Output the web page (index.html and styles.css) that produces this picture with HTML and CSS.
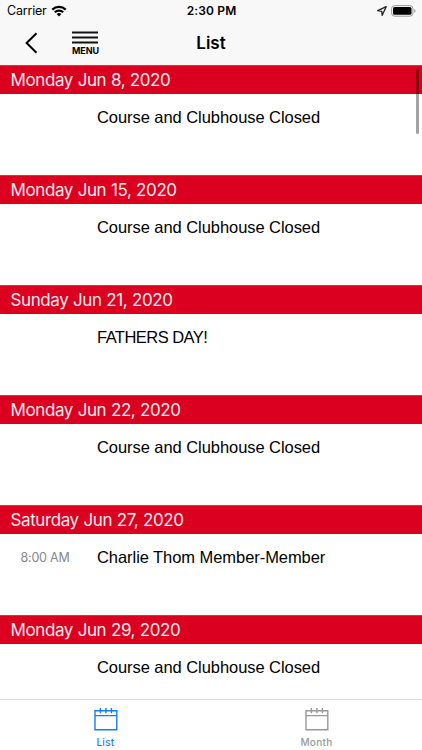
FILE: index.html
```
<!DOCTYPE html>
<html lang="en">
<head>
<meta charset="utf-8">
<meta name="viewport" content="width=device-width, initial-scale=1">
<title>List</title>
<link rel="stylesheet" href="styles.css">
</head>
<body>
<div class="app">
  <header class="top">
    <div class="status">
      <div class="status-left">
        <span>Carrier</span>
        <svg class="wifi" width="16" height="12" viewBox="0 0 16 12" fill="none" stroke="#000" stroke-width="2.2"><path d="M1.3 4.6a9.5 9.5 0 0 1 13.4 0M3.8 7.3a6 6 0 0 1 8.4 0"/><path d="M5.6 9.1a3.5 3.5 0 0 1 4.8 0L8 11.6z" fill="#000" stroke="none"/></svg>
      </div>
      <span class="clock">2:30 PM</span>
      <div class="status-right">
        <svg width="10" height="10" viewBox="0 0 10 10" fill="none" stroke="#222" stroke-width="1.3" stroke-linejoin="round"><path d="M9.2.7.7 4.7l4 .6.5 4z"/></svg>
        <svg width="25" height="12" viewBox="0 0 25 12"><rect x=".6" y=".6" width="21.3" height="10.6" rx="3" fill="none" stroke="#999"/><rect x="2" y="2" width="18.5" height="7.8" rx="1.6"/><path d="M23.2 4v4q1.3-.6 1.3-2t-1.3-2" fill="#999"/></svg>
      </div>
    </div>
    <nav class="navbar">
      <div class="nav-left">
        <svg class="back" width="13" height="22" viewBox="0 0 13 22" fill="none" stroke="#000" stroke-width="2"><path d="M11.5 1.3 1.6 11l9.9 9.7"/></svg>
        <div class="menu">
          <svg width="26" height="13" viewBox="0 0 26 13" stroke="#111" stroke-width="1.8"><path d="M0 1.5h26M0 6.5h26M0 11.5h26"/></svg>
          <span>MENU</span>
        </div>
      </div>
      <h1>List</h1>
      <div></div>
    </nav>
  </header>
  <main class="events">
    <section><h2>Monday Jun 8, 2020</h2><div class="event"><time></time><p>Course and Clubhouse Closed</p></div></section>
    <section><h2>Monday Jun 15, 2020</h2><div class="event"><time></time><p>Course and Clubhouse Closed</p></div></section>
    <section><h2>Sunday Jun 21, 2020</h2><div class="event"><time></time><p class="caps">FATHERS DAY!</p></div></section>
    <section><h2>Monday Jun 22, 2020</h2><div class="event"><time></time><p>Course and Clubhouse Closed</p></div></section>
    <section><h2>Saturday Jun 27, 2020</h2><div class="event"><time>8:00 AM</time><p>Charlie Thom Member-Member</p></div></section>
    <section><h2>Monday Jun 29, 2020</h2><div class="event"><time></time><p>Course and Clubhouse Closed</p></div></section>
    <div class="scrollbar"></div>
  </main>
  <footer class="tabs">
    <div class="tab active">
      <svg width="24" height="23" viewBox="0 0 24 23" fill="none" stroke="currentColor" stroke-width="1.4"><path d="M1 2.7h21.8v19H1zM1 7.6h21.8M6.4 0v5.3M11.9 0v5.3M17.4 0v5.3"/></svg>
      <span>List</span>
    </div>
    <div class="tab">
      <svg width="24" height="23" viewBox="0 0 24 23" fill="none" stroke="currentColor" stroke-width="1.4"><path d="M1 2.7h21.8v19H1zM1 7.6h21.8M6.4 0v5.3M11.9 0v5.3M17.4 0v5.3"/></svg>
      <span>Month</span>
    </div>
  </footer>
</div>
</body>
</html>
```
FILE: styles.css
```
* { box-sizing: border-box; }
body { margin: 0; background: #fff; color: #000; font-family: Inter, "Liberation Sans", sans-serif; }
h1, h2, p { margin: 0; font-weight: 400; }
svg { display: block; flex: none; }
.app { width: 422px; height: 750px; display: flex; flex-direction: column; overflow: hidden; }
.top { height: 65px; flex: none; background: #f8f8f8; }
.status { height: 22px; padding: 0 6px 0 7px; display: grid; grid-template-columns: 1fr auto 1fr; align-items: center; font-size: 12.5px; line-height: 22px; }
.status-left { display: flex; align-items: center; gap: 4px; letter-spacing: -0.2px; }
.clock { font-weight: 600; font-size: 12px; letter-spacing: 0.15px; }
.status-right { display: flex; justify-content: flex-end; align-items: center; gap: 4px; }
.navbar { height: 41px; display: grid; grid-template-columns: 1fr auto 1fr; align-items: center; }
.nav-left { display: flex; align-items: center; padding-left: 25px; gap: 34px; }
.menu { display: flex; flex-direction: column; align-items: center; gap: 2px; font-size: 9px; line-height: 9px; font-weight: 700; letter-spacing: -0.1px; }
h1 { font-size: 17px; line-height: 22px; font-weight: 600; }
.events { flex: 1; min-height: 0; position: relative; overflow: hidden; }
section { height: 110px; }
h2 { height: 29px; padding-left: 10.5px; background: #db0020; border-top: 1px solid #c83a4c; color: #fbe9ec; font-size: 17px; line-height: 29px; letter-spacing: -0.4px; word-spacing: 0.3px; }
.event { display: flex; align-items: center; height: 47px; font-family: "Liberation Sans", sans-serif; }
time { width: 97px; padding-left: 20.5px; color: #888; font: 12.5px Inter, sans-serif; letter-spacing: -0.2px; }
.event p { font-size: 16.5px; white-space: nowrap; letter-spacing: -0.06px; }
.event .caps { letter-spacing: -0.54px; }
.scrollbar { position: absolute; top: 4px; right: 3px; width: 3px; height: 65px; border-radius: 2px; background: rgba(0,0,0,.36); }
.tabs { height: 51px; flex: none; display: grid; grid-template-columns: 1fr 1fr; background: #fff; border-top: 1px solid #d9d9d9; }
.tab { display: flex; flex-direction: column; align-items: center; padding-top: 8px; gap: 5px; color: #999; font-size: 10px; line-height: 12px; font-weight: 500; letter-spacing: 0.3px; }
.tab.active { color: #157ff0; }
```
